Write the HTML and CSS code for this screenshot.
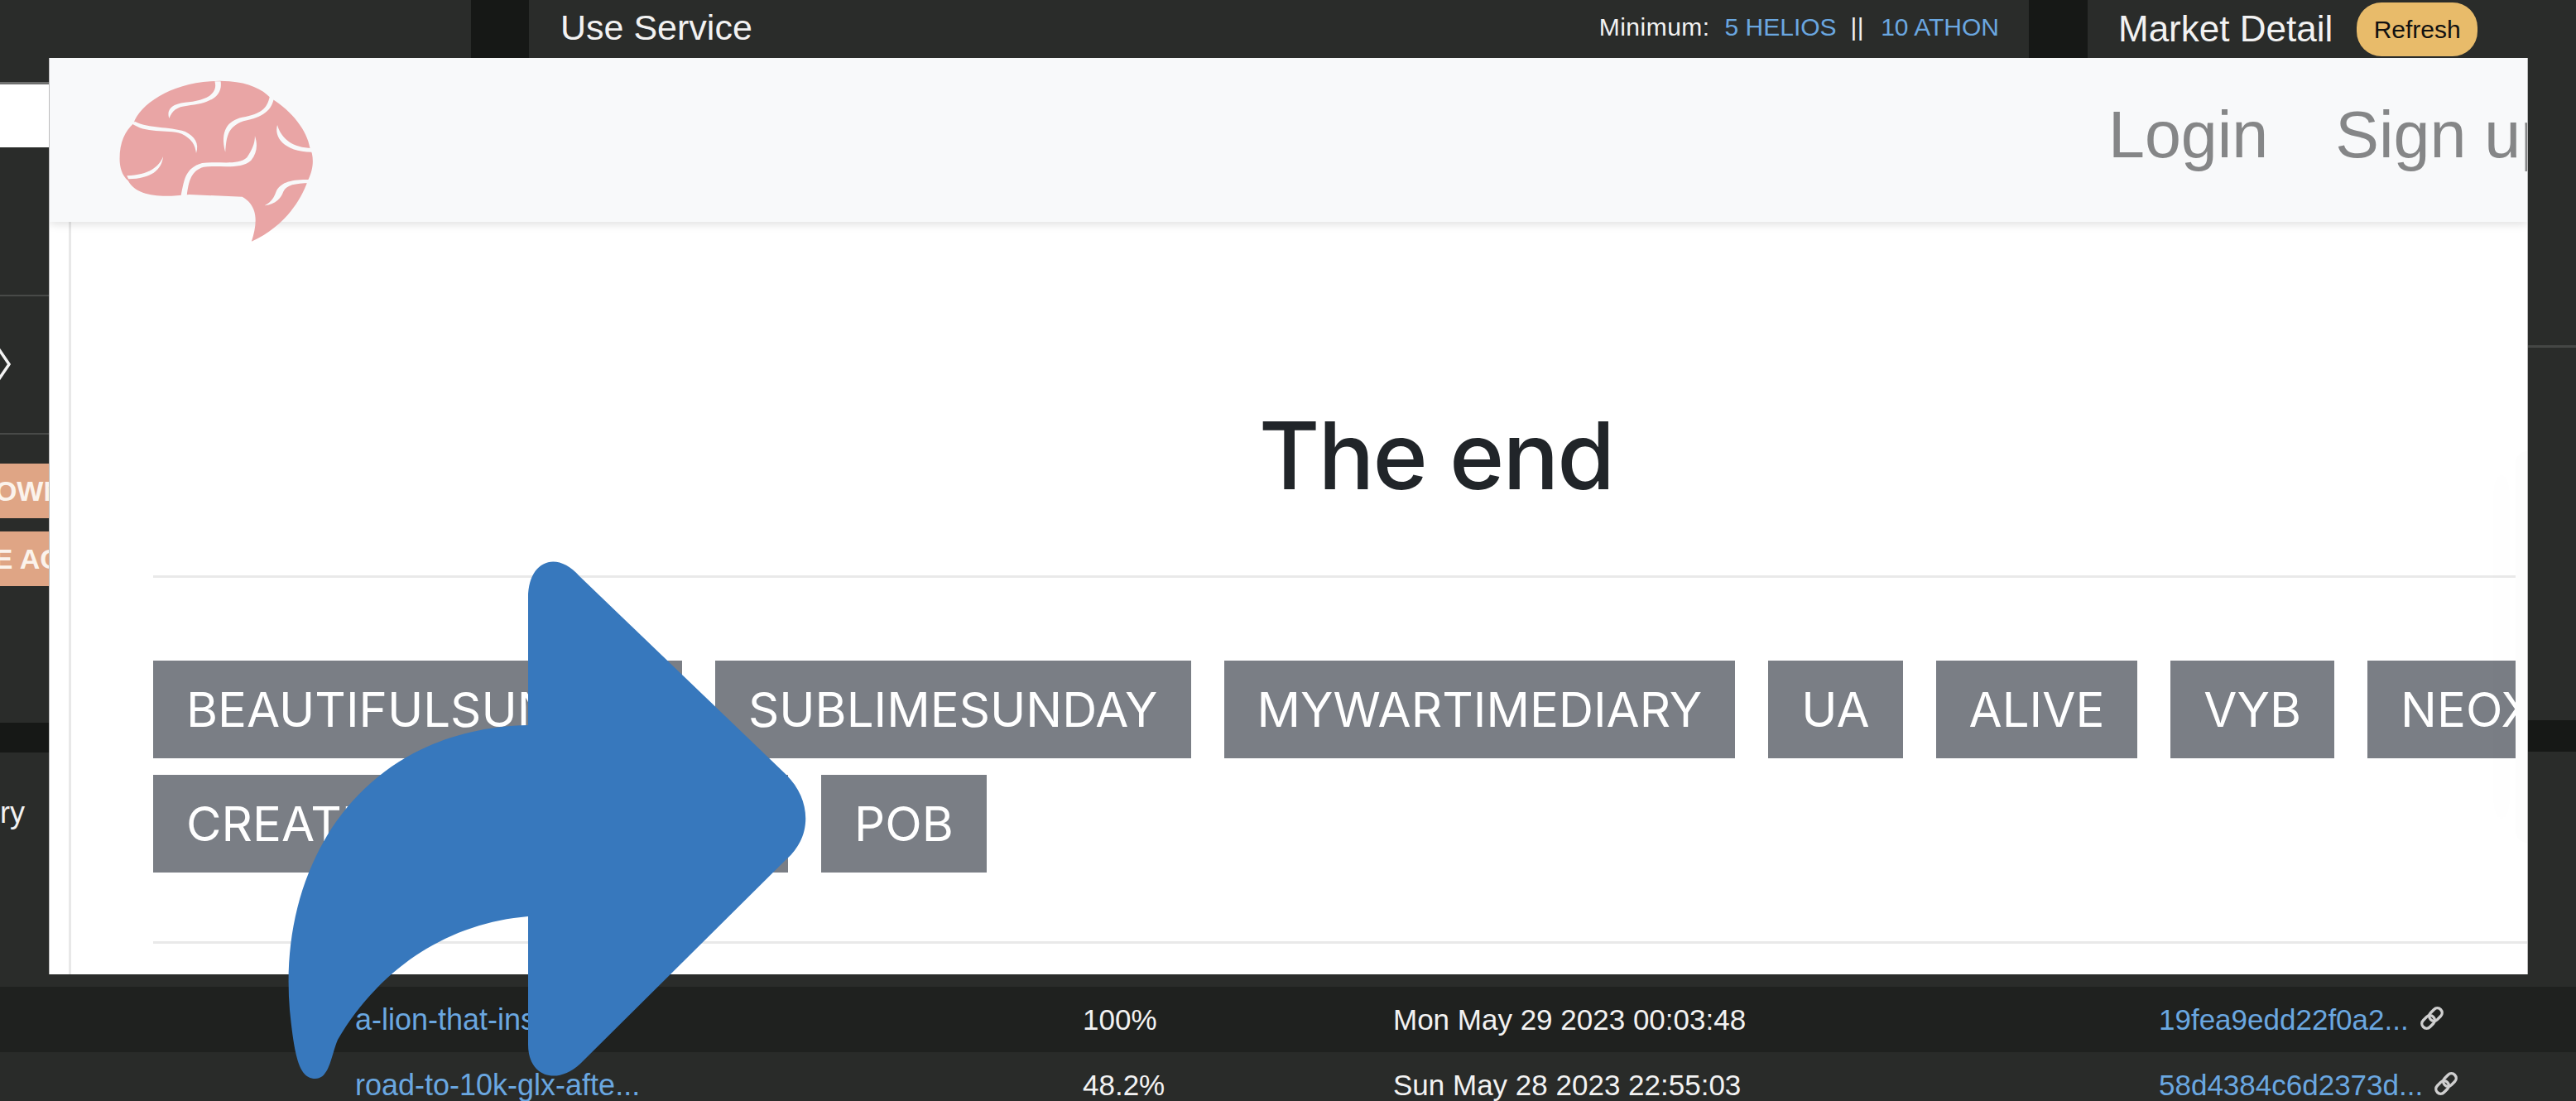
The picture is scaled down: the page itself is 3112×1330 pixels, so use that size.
FILE: index.html
```html
<!DOCTYPE html>
<html lang="en">
<head>
    <meta charset="UTF-8">
    <title>The end</title>
    <link rel="stylesheet" href="styles.css">
</head>
<body>
    <div class="screen">
        <div class="upper">
            <div class="strip-left">
                <div class="strip-input"></div>
                <svg class="chevron" viewBox="0 0 14 50"><polyline points="-4,2 11,24 -4,46"/></svg>
                <div class="strip-line"></div>
                <div class="strip-btn first"><span class="btn-a">BREAKDOWN</span></div>
                <div class="strip-btn"><span class="btn-b">TRADE ACTION</span></div>
                <div class="strip-band"></div>
                <div class="strip-label"><span>Category</span></div>
            </div>

            <div class="middle">
                <div class="topbar">
                    <div class="top-left"></div>
                    <div class="service">
                        <span class="service-title">Use Service</span>
                        <span class="minimum">Minimum: <a>5 HELIOS</a><i>||</i><a>10 ATHON</a></span>
                    </div>
                    <div class="market">
                        <span class="market-title">Market Detail</span>
                        <button class="refresh">Refresh</button>
                    </div>
                </div>

                <div class="overlay">
                    <nav class="nav">
                        <svg class="brain" viewBox="280 280 470 600" preserveAspectRatio="none">
                            <path class="brain-fill" d="M285 570C285 510 298 470 318 442C332 375 405 298 500 290C515 288 530 288 545 290C590 295 622 318 642 350C695 400 728 470 735 530C744 560 746 600 730 650C712 730 670 820 597 870C612 800 612 740 575 708L450 700L420 704C370 710 322 700 305 650C290 630 285 600 285 570Z"/>
                            <path class="brain-line" d="M510 290C520 345 475 362 440 366C405 372 396 395 402 424C410 395 420 382 445 378C490 372 530 350 524 290Z"/>
                            <path class="brain-line" d="M312 440C345 482 395 462 432 480C455 497 464 520 466 550C474 515 462 488 440 472C400 452 355 462 322 436Z"/>
                            <path class="brain-line" d="M388 562C378 600 355 628 302 632L306 644C360 642 384 612 388 562Z"/>
                            <path class="brain-line" d="M430 704C438 645 440 604 480 586C520 578 565 596 586 566C598 540 605 515 605 488C612 520 610 550 596 576C570 612 520 592 484 600C455 612 448 650 444 704Z"/>
                            <path class="brain-line" d="M640 345C634 385 622 408 575 420C540 432 522 470 535 546C538 490 540 455 578 434C625 420 645 395 650 350Z"/>
                            <path class="brain-line" d="M658 448C650 490 672 545 740 546L740 532C695 530 668 500 658 448Z"/>
                            <path class="brain-line" d="M736 646C690 644 665 656 655 690C650 710 645 725 628 740C655 735 668 710 672 690C680 664 700 660 734 658Z"/>
                        </svg>
                        <div class="nav-links">
                            <a>Login</a>
                            <a>Sign up</a>
                        </div>
                    </nav>
                    <div class="main">
                        <h1>The end</h1>
                        <hr class="rule-short">
                        <div class="tag-row">
                            <span class="tag">BEAUTIFULSUNDAY</span>
                            <span class="tag">SUBLIMESUNDAY</span>
                            <span class="tag">MYWARTIMEDIARY</span>
                            <span class="tag">UA</span>
                            <span class="tag">ALIVE</span>
                            <span class="tag">VYB</span>
                            <span class="tag">NEOXAG</span>
                        </div>
                        <div class="tag-row">
                            <span class="tag tag-wide">CREATIVECOMMUNITY</span>
                            <span class="tag">POB</span>
                        </div>
                        <hr class="rule-long">
                    </div>
                    <div class="edge-panel"></div>
                </div>
            </div>

            <div class="strip-right">
                <div class="right-line"></div>
                <div class="right-band"></div>
            </div>
        </div>

        <div class="row row-dark">
            <a class="perm">a-lion-that-inspire...</a>
            <span>100%</span>
            <span>Mon May 29 2023 00:03:48</span>
            <span class="hash"><a>19fea9edd22f0a2...</a>
                <svg class="chain" viewBox="0 0 28 28"><g transform="rotate(-45 14 14)"><rect x="1" y="9" width="15" height="10" rx="5"/><rect x="12" y="9" width="15" height="10" rx="5"/></g></svg>
            </span>
        </div>
        <div class="row">
            <a class="perm">road-to-10k-glx-afte...</a>
            <span>48.2%</span>
            <span>Sun May 28 2023 22:55:03</span>
            <span class="hash"><a>58d4384c6d2373d...</a>
                <svg class="chain" viewBox="0 0 28 28"><g transform="rotate(-45 14 14)"><rect x="1" y="9" width="15" height="10" rx="5"/><rect x="12" y="9" width="15" height="10" rx="5"/></g></svg>
            </span>
        </div>

        <svg class="arrow" viewBox="0 0 3112 1330">
            <path d="M638 722C638 678 672 664 700 696L950 936C980 966 982 1010 950 1038L701 1285C672 1312 638 1300 638 1262L638 1107C545 1115 462 1165 408 1256C400 1275 398 1303 381 1303C362 1303 356 1280 350 1220C335 1040 440 880 638 876Z"/>
        </svg>
    </div>
</body>
</html>
```

FILE: styles.css
```css
* {
    box-sizing: border-box;
}

body {
    margin: 0;
    background-color: #2a2c2a;
    font-family: "Liberation Sans", Arial, sans-serif;
    color: #f2f2f2;
}

.screen {
    position: relative;
    width: 3112px;
    height: 1330px;
    overflow: hidden;
    background-color: #2a2c2a;
}

.upper {
    display: flex;
    height: 1192px;
}

/* what is left of the page behind the popup */
.strip-left {
    width: 59px;
    flex-shrink: 0;
    overflow: hidden;
}

.strip-input {
    height: 259px;
    margin-top: 99px;
    border-top: 3px solid #6f706f;
    border-bottom: 2px solid #484a48;
    background: linear-gradient(#fff 76px, #2a2c2a 76px);
}

.chevron {
    display: block;
    width: 14px;
    height: 50px;
    margin-top: 58px;
    margin-bottom: 57px;
}

.chevron polyline {
    fill: none;
    stroke: #f4f4f4;
    stroke-width: 3.5;
}

.strip-line {
    height: 2px;
    background-color: #484a48;
}

.strip-btn {
    display: flex;
    justify-content: flex-end;
    align-items: center;
    height: 66px;
    margin-top: 16px;
    background-color: #dfa585;
    color: #fbf3ec;
    font-size: 34px;
    font-weight: bold;
    white-space: nowrap;
}

.strip-btn.first {
    margin-top: 35px;
}

.btn-a {
    margin-right: -18px;
}

.btn-b {
    margin-right: -95px;
}

.strip-band {
    height: 36px;
    margin-top: 165px;
    background-color: #161816;
}

.strip-label {
    display: flex;
    justify-content: flex-end;
    margin-top: 52px;
    padding-right: 29px;
    font-size: 36px;
    white-space: nowrap;
}

.strip-right {
    width: 58px;
    flex-shrink: 0;
}

.right-line {
    height: 3px;
    margin-top: 417px;
    background-color: #454745;
}

.right-band {
    height: 38px;
    margin-top: 450px;
    background-color: #161816;
}

.middle {
    flex: 1;
    min-width: 0;
}

.topbar {
    display: flex;
    height: 70px;
    background-color: #161816;
}

.top-left {
    width: 510px;
    background-color: #2a2c2a;
}

.service {
    display: flex;
    justify-content: space-between;
    align-items: center;
    width: 1812px;
    margin-left: 70px;
    padding: 0 36px 4px 38px;
    background-color: #2a2c2a;
}

.service-title {
    font-size: 43px;
}

.minimum {
    font-size: 30px;
    letter-spacing: 0.5px;
}

.minimum a {
    margin-left: 9px;
    color: #6aa7e0;
    letter-spacing: 0;
}

.minimum i {
    margin-left: 17px;
    margin-right: 11px;
    font-style: normal;
}

.market {
    display: flex;
    flex: 1;
    align-items: flex-start;
    margin-left: 71px;
    padding-left: 37px;
    background-color: #2a2c2a;
}

.market-title {
    margin-top: 10px;
    font-size: 44px;
}

.refresh {
    width: 146px;
    height: 65px;
    margin-top: 3px;
    margin-left: 29px;
    padding: 0;
    border: none;
    border-radius: 30px;
    background-color: #e8bb6a;
    color: #111;
    font-family: "Liberation Sans", Arial, sans-serif;
    font-size: 30px;
}

.overlay {
    position: relative;
    height: 1107px;
    overflow: hidden;
    background-color: #fff;
    border-left: 1px solid #bcbcbc;
    border-right: 1px solid #bcbcbc;
}

.nav {
    position: relative;
    z-index: 1;
    display: flex;
    justify-content: space-between;
    height: 198px;
    padding-left: 82px;
    background-color: #f8f9fa;
    box-shadow: 0 3px 10px rgba(0, 0, 0, 0.12);
}

.brain {
    width: 240px;
    height: 200px;
    margin-top: 25px;
    overflow: visible;
}

.brain-fill {
    fill: #e9a5a5;
}

.brain-line {
    fill: #f8f9fa;
}

.nav-links {
    display: flex;
    flex-shrink: 0;
    width: 506px;
    gap: 81px;
    padding-top: 47px;
    color: #858687;
    font-size: 79px;
    white-space: nowrap;
}

.main {
    height: 909px;
    margin-left: 23px;
    padding-left: 99px;
    border-left: 3px solid #e8e8e8;
}

h1 {
    margin: 0;
    padding-top: 212px;
    padding-left: 232px;
    text-align: center;
    color: #212529;
    font-family: Inter, "Liberation Sans", sans-serif;
    font-size: 113px;
    font-weight: 500;
    line-height: 140px;
    letter-spacing: -2px;
}

hr {
    height: 3px;
    margin: 0;
    border: none;
    background-color: #e9e9e9;
}

.rule-short {
    margin-top: 75px;
    margin-right: 14px;
}

.rule-long {
    margin-top: 83px;
}

.tag-row {
    display: flex;
    gap: 40px;
    margin-right: 14px;
    overflow: hidden;
    white-space: nowrap;
}

.rule-short + .tag-row {
    margin-top: 100px;
    margin-bottom: 20px;
}

.tag {
    flex-shrink: 0;
    padding: 0 40px;
    background-color: #7a7e85;
    color: #fff;
    font-family: Inter, "Liberation Sans", sans-serif;
    font-size: 58.2px;
    line-height: 118px;
}

.tag-wide {
    width: 767px;
}

.edge-panel {
    position: absolute;
    top: 475px;
    right: 0;
    width: 14px;
    height: 473px;
    border-radius: 14px 0 0 14px;
    background-color: #fdfdfd;
    box-shadow: -24px 0 40px rgba(0, 0, 0, 0.015);
}

.row {
    display: grid;
    grid-template-columns: 429px 879px 375px 925px 1fr;
    align-items: center;
    height: 79px;
    background-color: #292b29;
    font-size: 35px;
    white-space: nowrap;
}

.row-dark {
    background-color: #1f211f;
}

.row .perm {
    grid-column: 2 / 2;
    width: 879px;
    color: #6aa7e0;
    font-size: 36px;
}

.row > span:nth-of-type(1) {
    grid-column: 3;
}

.hash {
    display: flex;
    align-items: center;
    gap: 12px;
    color: #6aa7e0;
}

.chain {
    width: 32px;
    height: 32px;
    margin-top: -4px;
}

.chain rect {
    fill: none;
    stroke: #cfcfcf;
    stroke-width: 3;
}

/* big share arrow laid over the video */
.arrow {
    position: absolute;
    top: 0;
    left: 0;
    width: 3112px;
    height: 1330px;
}

.arrow path {
    fill: #3778bd;
}
```
